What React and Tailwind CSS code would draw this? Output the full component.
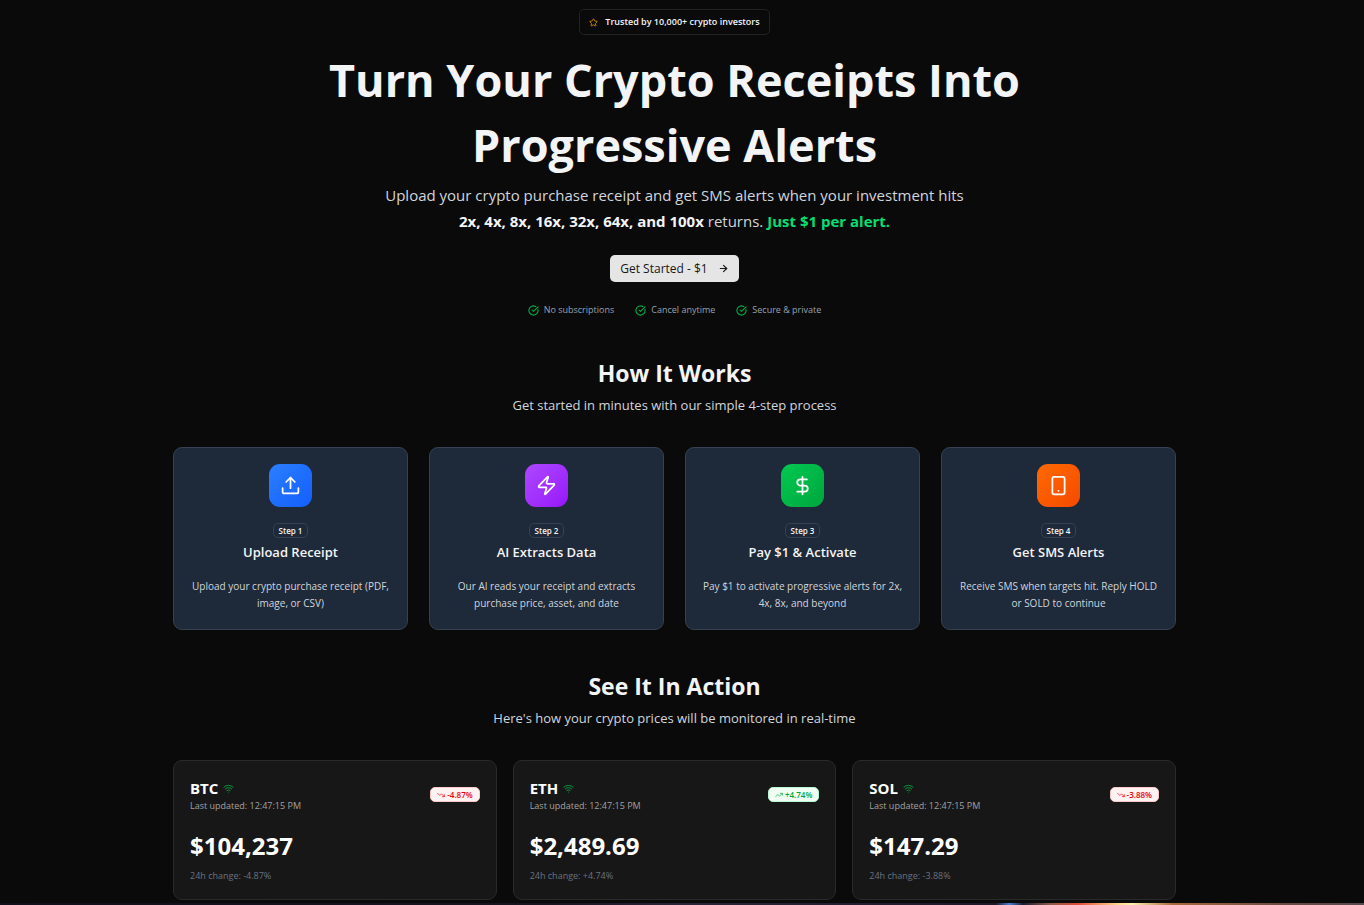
import {
  ArrowRight,
  CircleCheckBig,
  DollarSign,
  Smartphone,
  Star,
  TrendingDown,
  TrendingUp,
  Upload,
  Wifi,
  Zap,
} from "lucide-react";

const perks = ["No subscriptions", "Cancel anytime", "Secure & private"];

const steps = [
  {
    icon: Upload,
    tile: "from-[#2b7fff] to-[#155dfc]",
    title: "Upload Receipt",
    text: "Upload your crypto purchase receipt (PDF, image, or CSV)",
  },
  {
    icon: Zap,
    tile: "from-[#ad46ff] to-[#9810fa]",
    title: "AI Extracts Data",
    text: "Our AI reads your receipt and extracts purchase price, asset, and date",
  },
  {
    icon: DollarSign,
    tile: "from-[#00c950] to-[#00a63e]",
    title: "Pay $1 & Activate",
    text: "Pay $1 to activate progressive alerts for 2x, 4x, 8x, and beyond",
  },
  {
    icon: Smartphone,
    tile: "from-[#ff6900] to-[#f54900]",
    title: "Get SMS Alerts",
    text: "Receive SMS when targets hit. Reply HOLD or SOLD to continue",
  },
];

const prices = [
  { symbol: "BTC", price: "$104,237", change: "-4.87%", up: false },
  { symbol: "ETH", price: "$2,489.69", change: "+4.74%", up: true },
  { symbol: "SOL", price: "$147.29", change: "-3.88%", up: false },
];

function SectionHeading({ title, text }) {
  return (
    <div className="flex flex-col items-center text-center">
      <h2 className="text-[23px] leading-8 font-bold text-gray-100">{title}</h2>
      <p className="mt-1 text-[13px] leading-6 text-gray-300">{text}</p>
    </div>
  );
}

function StepCard({ number, icon: Icon, tile, title, text }) {
  return (
    <li className="flex flex-col items-center rounded-[9px] border border-gray-700 bg-gray-800 px-4 pt-4 pb-[17px] text-center">
      <div className={`flex size-[43px] items-center justify-center rounded-[11px] bg-linear-to-br ${tile}`}>
        <Icon className="size-[21px] text-white" aria-hidden="true" />
      </div>
      <span className="mt-4 rounded-[5px] border border-gray-700 px-[5px] text-[8px] leading-[13px] font-semibold text-gray-100">
        Step {number}
      </span>
      <h3 className="mt-1 text-[13px] leading-5 font-semibold text-gray-100">{title}</h3>
      <p className="mt-4 text-[10px] leading-[17px] text-gray-300">{text}</p>
    </li>
  );
}

function PriceCard({ symbol, price, change, up }) {
  const Trend = up ? TrendingUp : TrendingDown;
  const tone = up
    ? "border-[#b9f8cf] bg-green-50 text-green-600"
    : "border-[#ffc9c9] bg-red-50 text-red-600";
  return (
    <li className="rounded-[9px] border border-[#2a2a2a] bg-[#171717] px-4 pt-4 pb-[17px]">
      <div className="flex items-center justify-between">
        <div>
          <h3 className="flex items-center gap-[5px] text-[15px] leading-[23px] font-bold text-white">
            {symbol}
            <Wifi className="size-[11px] text-green-600" aria-label="Live" />
          </h3>
          <p className="text-[9px] leading-3 text-[#a1a1a1]">Last updated: 12:47:15 PM</p>
        </div>
        <span className={`flex items-center gap-[2px] rounded-[5px] border px-[6px] text-[8px] leading-[13px] font-semibold ${tone}`}>
          <Trend className="size-2" aria-hidden="true" />
          {change}
        </span>
      </div>
      <p className="mt-[18px] text-[24px] leading-8 font-bold text-white">{price}</p>
      <p className="mt-2 text-[9px] leading-3 text-gray-500">24h change: {change}</p>
    </li>
  );
}

export default function App() {
  return (
    <div className="flex min-h-screen flex-col bg-[#0a0a0a] font-['Open_Sans','Noto_Sans',sans-serif]">
      <main className="mr-[15px] px-6 pt-[9px]">
        <div className="mx-auto max-w-[1003px]">
          <section className="flex flex-col items-center text-center">
            <span className="flex items-center gap-[7px] rounded-[5px] border border-[#222222] px-[9px] text-[9px] leading-6 font-semibold text-gray-100">
              <Star className="size-[9px] text-[#d08700]" strokeWidth={2.5} aria-hidden="true" />
              Trusted by 10,000+ crypto investors
            </span>
            <h1 className="mt-3 max-w-[760px] text-[45px] leading-[65px] font-bold text-gray-100">
              Turn Your Crypto Receipts Into Progressive Alerts
            </h1>
            <p className="mt-[5px] max-w-[597px] text-[15px] leading-[26px] text-gray-300">
              Upload your crypto purchase receipt and get SMS alerts when your investment hits{" "}
              <strong className="font-bold text-gray-100">2x, 4x, 8x, 16x, 32x, 64x, and 100x</strong> returns.{" "}
              <strong className="font-bold text-[#05df72]">Just $1 per alert.</strong>
            </p>
            <button
              type="button"
              className="mt-[21px] flex items-center gap-[10px] rounded-[5px] bg-[#e5e5e5] px-[10px] text-[12px] leading-[27px] font-medium text-[#171717]"
            >
              Get Started - $1
              <ArrowRight className="size-[11px]" strokeWidth={2.5} aria-hidden="true" />
            </button>
            <ul className="mt-5 flex gap-[21px] text-[9px] leading-4 text-gray-400">
              {perks.map((perk) => (
                <li key={perk} className="flex items-center gap-[5px]">
                  <CircleCheckBig className="size-[11px] text-[#00a63e]" strokeWidth={2.5} aria-hidden="true" />
                  {perk}
                </li>
              ))}
            </ul>
          </section>

          <section className="mt-[39px]">
            <SectionHeading title="How It Works" text="Get started in minutes with our simple 4-step process" />
            <ol className="mt-[30px] grid grid-cols-4 gap-[21px]">
              {steps.map((step, index) => (
                <StepCard key={step.title} number={index + 1} {...step} />
              ))}
            </ol>
          </section>

          <section className="mt-10">
            <SectionHeading title="See It In Action" text="Here's how your crypto prices will be monitored in real-time" />
            <ul className="mt-[30px] grid grid-cols-3 gap-4">
              {prices.map((item) => (
                <PriceCard key={item.symbol} {...item} />
              ))}
            </ul>
          </section>
        </div>
      </main>
      <div
        className="mt-auto h-[2px] bg-[linear-gradient(90deg,#120f1c_0%,#17131f_40%,#2a2438_50%,#1d1728_73%,#4a7fd0_74%,#1b1b33_75%,#8a5a48_77%,#e04a3a_79%,#ffd98a_82%,#fff0b0_83%,#a8683a_86%,#6a4a44_94%,#55494c_100%)]"
        aria-hidden="true"
      />
    </div>
  );
}
